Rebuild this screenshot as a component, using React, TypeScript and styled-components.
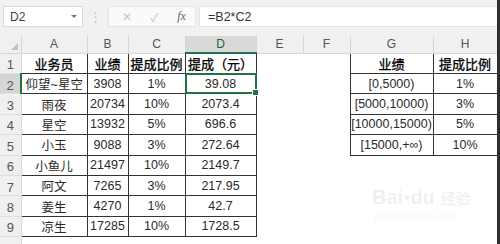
import React from 'react'
import styled, { createGlobalStyle } from 'styled-components'

const GlobalStyle = createGlobalStyle`
  html, body { margin: 0; padding: 0; background: #fff; }
  body { font-family: "Liberation Sans", "Noto Sans CJK SC", sans-serif; }
`

const cols = [21, 66, 41, 57, 71, 47, 47, 83, 64]
const letters = ['A', 'B', 'C', 'D', 'E', 'F', 'G', 'H']

const rows: string[][] = [
  ['业务员', '业绩', '提成比例', '提成（元）', '', '', '业绩', '提成比例'],
  ['仰望~星空', '3908', '1%', '39.08', '', '', '[0,5000)', '1%'],
  ['雨夜', '20734', '10%', '2073.4', '', '', '[5000,10000)', '3%'],
  ['星空', '13932', '5%', '696.6', '', '', '[10000,15000)', '5%'],
  ['小玉', '9088', '3%', '272.64', '', '', '[15000,+∞)', '10%'],
  ['小鱼儿', '21497', '10%', '2149.7', '', '', '', ''],
  ['阿文', '7265', '3%', '217.95', '', '', '', ''],
  ['姜生', '4270', '1%', '42.7', '', '', '', ''],
  ['凉生', '17285', '10%', '1728.5', '', '', '', ''],
  ['', '', '', '', '', '', '', ''],
]

function boxed(r: number, c: number) {
  if (r < 9 && c < 4) return true
  if (r < 5 && (c === 6 || c === 7)) return true
  return false
}

function App() {
  return (
    <>
      <GlobalStyle />
      <Page>
        <FormulaBar>
          <NameBox>
            <span>D2</span>
            <Caret />
          </NameBox>
          <Grip>⋮</Grip>
          <FxButtons>
            <span>✕</span>
            <span>✓</span>
            <Fx>fx</Fx>
          </FxButtons>
          <FormulaInput>=B2*C2</FormulaInput>
        </FormulaBar>
        <Sheet>
          <colgroup>
            {cols.map((w, i) => (
              <col key={i} style={{ width: w }} />
            ))}
          </colgroup>
          <thead>
            <tr>
              <Corner>
                <Tri />
              </Corner>
              {letters.map((l) => (
                <ColHead key={l} $active={l === 'D'}>
                  {l}
                </ColHead>
              ))}
            </tr>
          </thead>
          <tbody>
            {rows.map((row, r) => (
              <tr key={r}>
                <RowHead $active={r === 1}>{r < 9 ? r + 1 : ''}</RowHead>
                {row.map((v, c) => (
                  <Cell key={c} $box={boxed(r, c)} $head={r === 0 && v !== ''}>
                    {v}
                    {r === 1 && c === 3 && (
                      <Selection>
                        <Handle />
                      </Selection>
                    )}
                  </Cell>
                ))}
              </tr>
            ))}
          </tbody>
        </Sheet>
        <Watermark>
          <WmLogo>
            Bai<Paw>●</Paw>du <small>经验</small>
          </WmLogo>
          <WmUrl>jingyan.baidu.com</WmUrl>
        </Watermark>
      </Page>
    </>
  )
}

const Page = styled.div`
  position: relative;
  width: 497px;
  height: 244px;
  overflow: hidden;
  border-right: 3px solid #2e2e2e;
  background: #fff;
`

const FormulaBar = styled.div`
  height: 36px;
  background: #f1f1f1;
  display: flex;
  align-items: center;
  padding: 0 0 3px 3px;
  box-sizing: border-box;
  font-size: 12px;
  color: #444;
`

const NameBox = styled.div`
  width: 80px;
  height: 21px;
  background: #fff;
  border: 1px solid #dadada;
  display: flex;
  align-items: center;
  justify-content: space-between;
  padding: 0 5px 0 6px;
  box-sizing: border-box;
`

const Caret = styled.i`
  width: 0;
  height: 0;
  border-left: 3px solid transparent;
  border-right: 3px solid transparent;
  border-top: 3px solid #777;
`

const Grip = styled.div`
  width: 25px;
  text-align: center;
  color: #c4c4c4;
  font-size: 13px;
`

const FxButtons = styled.div`
  width: 88px;
  height: 21px;
  background: #fafafa;
  border: 1px solid #e4e4e4;
  box-sizing: border-box;
  display: flex;
  align-items: center;
  justify-content: space-around;
  color: #c6c6c6;
  font-size: 12px;
  padding-left: 4px;
`

const Fx = styled.span`
  font-family: "Liberation Serif", serif;
  font-style: italic;
  color: #666;
  font-size: 12px;
`

const FormulaInput = styled.div`
  flex: 1;
  margin-left: 3px;
  height: 21px;
  background: #fff;
  border: 1px solid #e4e4e4;
  border-right: none;
  box-sizing: border-box;
  display: flex;
  align-items: center;
  padding-left: 8px;
  color: #333;
  font-size: 12.5px;
`

const Sheet = styled.table`
  border-collapse: collapse;
  table-layout: fixed;
  width: 497px;
  font-size: 12.5px;
  color: #222;
  tr {
    height: 20.4px;
  }
  thead tr {
    height: 17px;
  }
`

const Corner = styled.th`
  position: relative;
  background: #f0f0f0;
  border-right: 1px solid #d6d6d6;
  border-bottom: 1px solid #d6d6d6;
  padding: 0;
`

const Tri = styled.i`
  position: absolute;
  right: 3px;
  bottom: 3px;
  width: 0;
  height: 0;
  border-left: 7px solid transparent;
  border-bottom: 7px solid #c2c2c2;
`

const ColHead = styled.th<{ $active?: boolean }>`
  background: ${(p) => (p.$active ? '#d9d9d9' : '#f0f0f0')};
  border-right: 1px solid #d6d6d6;
  border-bottom: ${(p) => (p.$active ? '2px solid #217346' : '1px solid #d6d6d6')};
  font-weight: normal;
  font-size: 12px;
  color: ${(p) => (p.$active ? '#1d5c3a' : '#555')};
  padding: 0;
  line-height: 16px;
`

const RowHead = styled.td<{ $active?: boolean }>`
  background: ${(p) => (p.$active ? '#d6d6d6' : '#f0f0f0')};
  border-right: ${(p) => (p.$active ? '2px solid #217346' : '1px solid #d6d6d6')};
  border-bottom: 1px solid #dedede;
  text-align: center;
  color: #555;
  font-size: 13px;
  padding: 3px 0 0;
`

const Cell = styled.td<{ $box?: boolean; $head?: boolean }>`
  position: relative;
  border: ${(p) => (p.$box ? '1px solid #333' : 'none')};
  text-align: center;
  white-space: nowrap;
  overflow: visible;
  padding: 0;
  font-size: ${(p) => (p.$head ? '13px' : '12.5px')};
  font-weight: normal;
  color: ${(p) => (p.$head ? '#000' : '#2a2a2a')};
  -webkit-text-stroke: ${(p) => (p.$head ? '0.3px #000' : '0')};
`

const Selection = styled.span`
  position: absolute;
  left: -1px;
  top: -1px;
  right: -1px;
  bottom: -1px;
  border: 2px solid #217346;
  pointer-events: none;
`

const Handle = styled.i`
  position: absolute;
  right: -4px;
  bottom: -4px;
  width: 5px;
  height: 5px;
  background: #217346;
  border: 1px solid #fff;
`

const Watermark = styled.div`
  position: absolute;
  left: 372px;
  top: 186px;
  color: rgba(0, 0, 0, 0.07);
`

const WmLogo = styled.div`
  font-size: 20px;
  font-weight: bold;
  line-height: 22px;
  small {
    font-size: 15px;
  }
`

const Paw = styled.span`
  font-size: 12px;
  vertical-align: top;
`

const WmUrl = styled.div`
  font-size: 10px;
  padding-left: 2px;
`

export default App
